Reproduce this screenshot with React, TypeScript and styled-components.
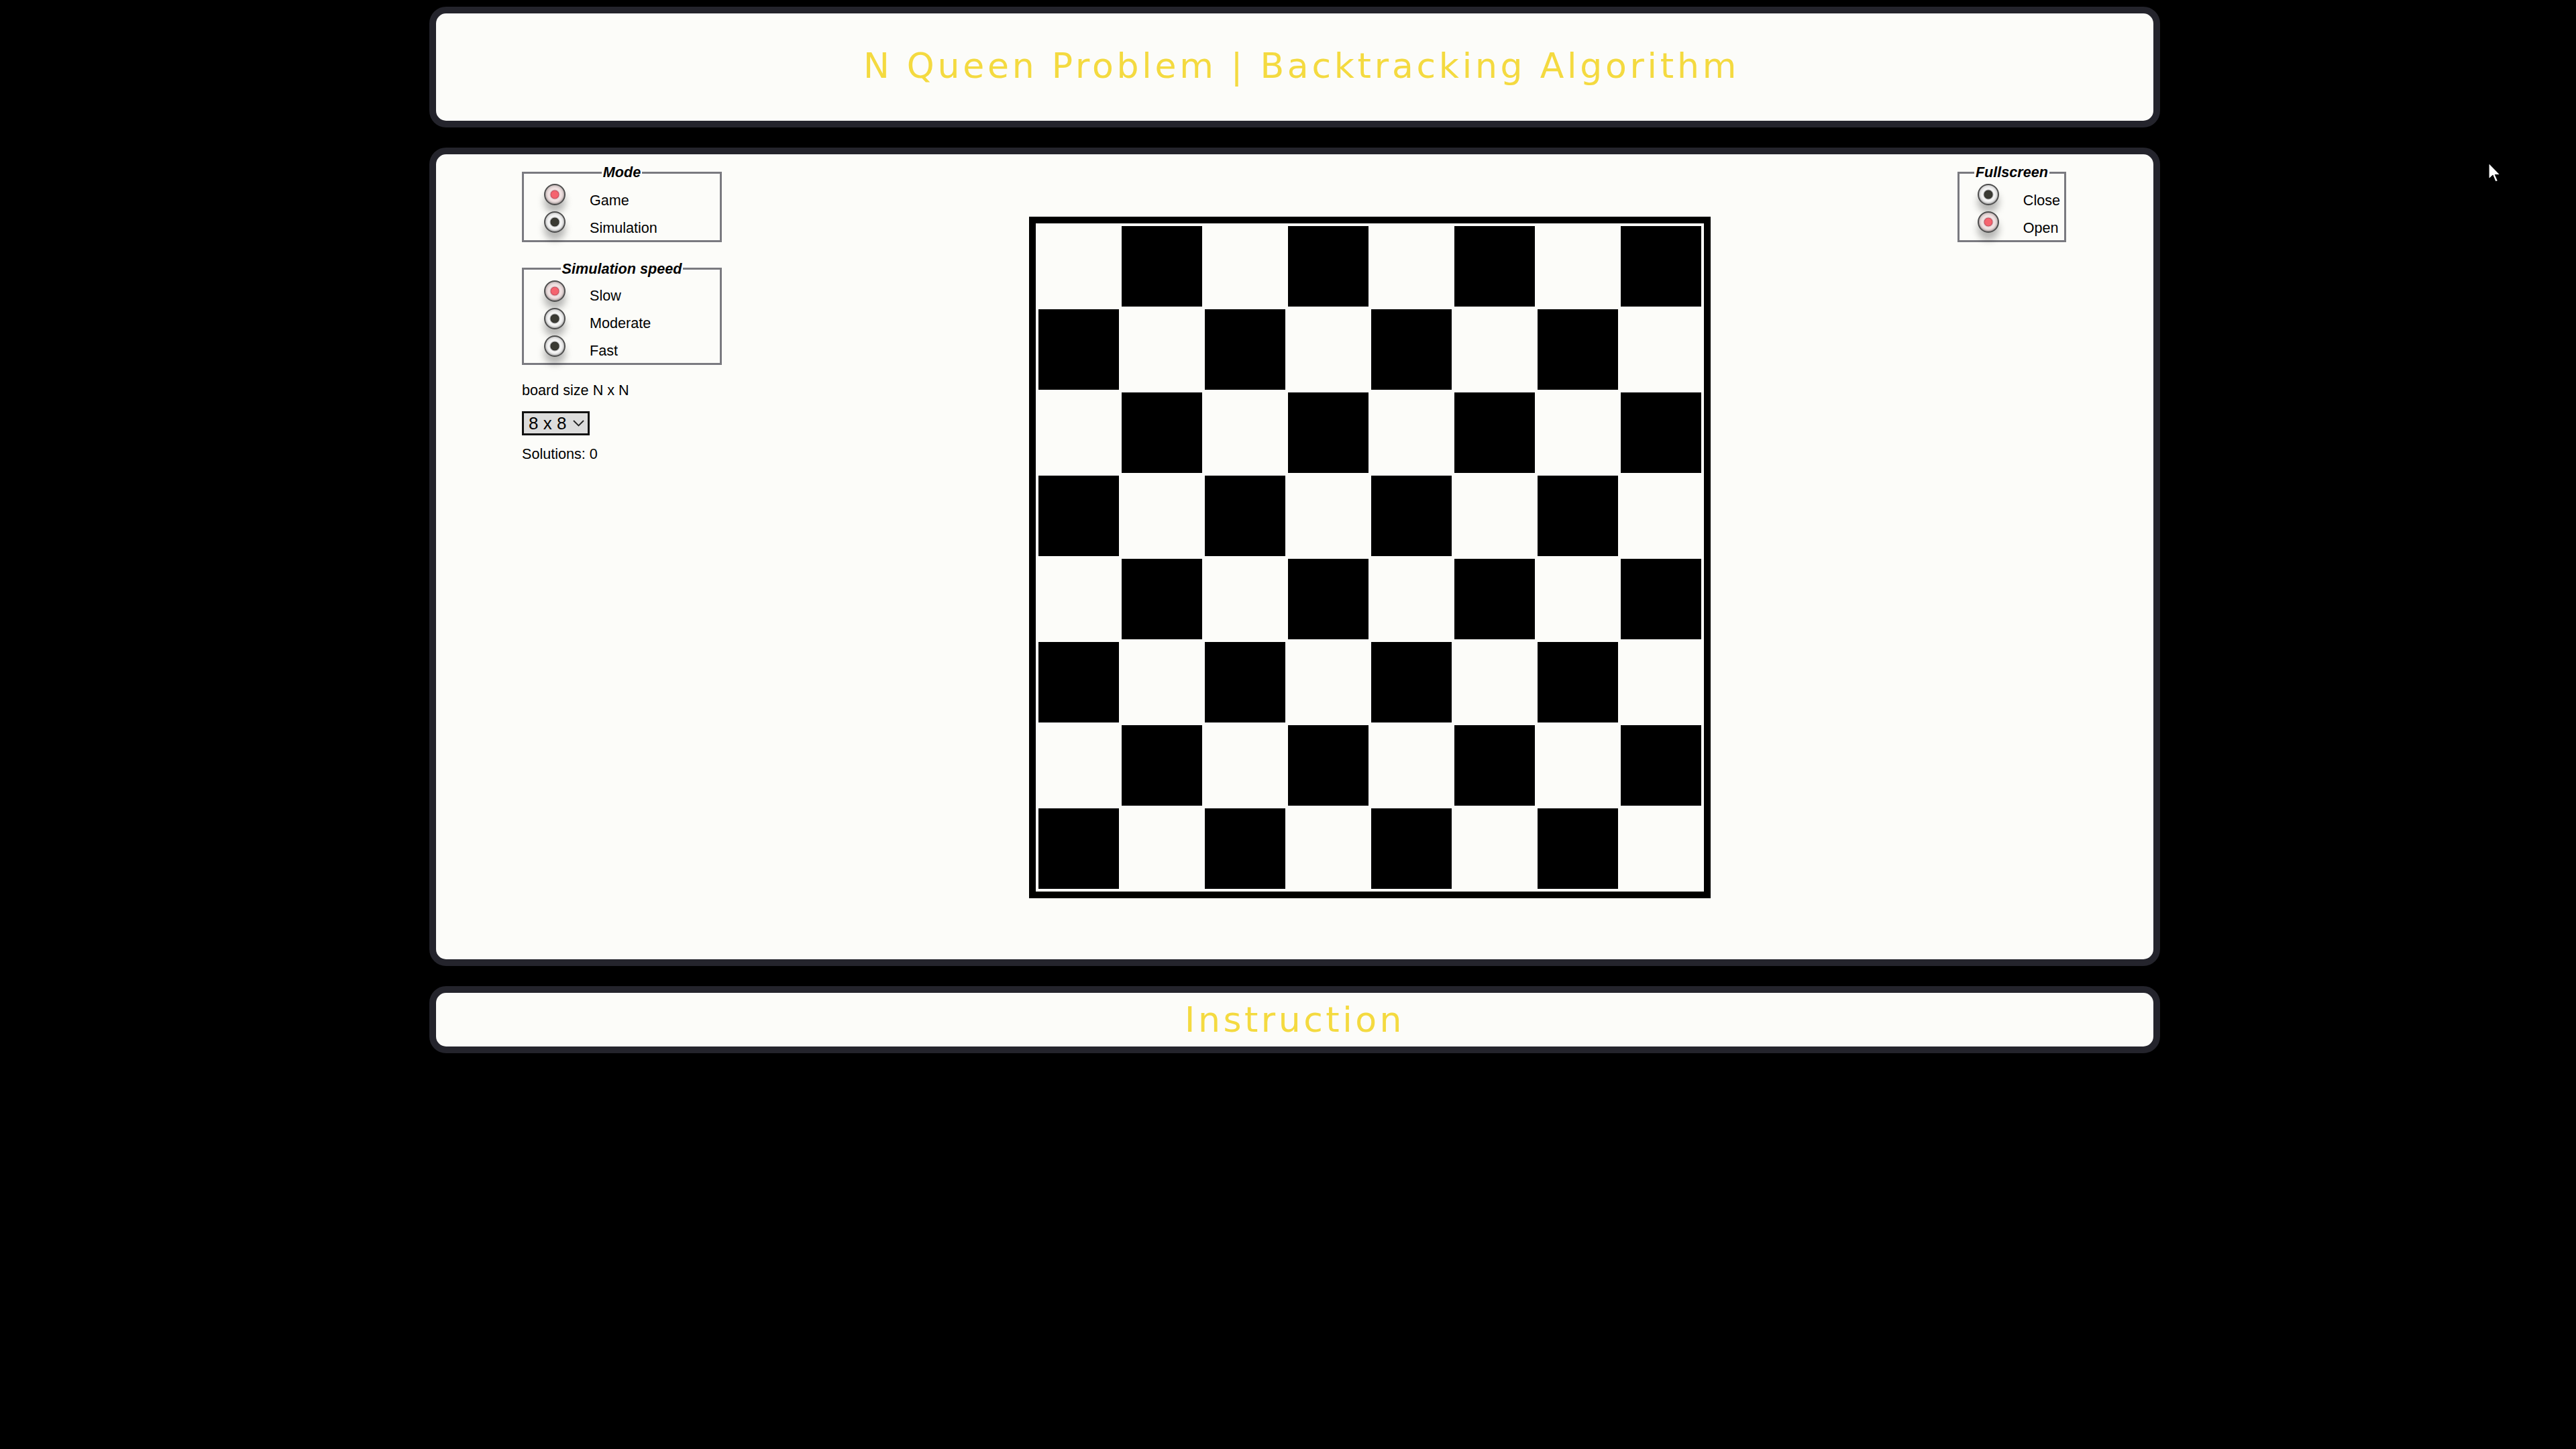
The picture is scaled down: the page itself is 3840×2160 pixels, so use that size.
import React from "react";
import styled, { createGlobalStyle } from "styled-components";

const GlobalStyle = createGlobalStyle`
  html, body { margin: 0; padding: 0; background: #000; }
  body {
    position: relative;
    min-height: 2160px;
    font-family: "Liberation Sans", Arial, sans-serif;
    color: #000;
  }
`;

const Page = styled.div`
  width: 2580px;
  margin-left: calc(50% - 1280px);
  padding-top: 10px;
  display: flex;
  flex-direction: column;
  gap: 30px;
`;

const Panel = styled.section`
  background: #fcfcf9;
  border: 10px solid #24242c;
  border-radius: 25px;
`;

const Heading = styled.h1<{ $pt: number; $pb: number; $pl: number; $ls: number }>`
  margin: 0;
  padding: ${(p) => p.$pt}px 0 ${(p) => p.$pb}px ${(p) => p.$pl}px;
  font-family: "DejaVu Sans", Verdana, sans-serif;
  font-weight: normal;
  font-size: 52px;
  line-height: 60px;
  letter-spacing: ${(p) => p.$ls}px;
  color: #f4da40;
  text-align: center;
`;

const Main = styled(Panel)`
  display: flex;
  align-items: flex-start;
  padding: 14px 130px 91px 128px;
`;

const Controls = styled.div`
  width: 298px;
  flex: none;
  display: flex;
  flex-direction: column;
  align-items: stretch;
`;

const Group = styled.fieldset<{ $mt?: number; $pb: number; $push?: boolean }>`
  margin: ${(p) => p.$mt ?? 0}px 0 0 ${(p) => (p.$push ? "auto" : "0")};
  min-width: 0;
  padding: 4px 0 ${(p) => p.$pb}px;
  border: 3px solid #7a7a80;
  flex: none;
`;

const Legend = styled.legend`
  margin: 0 auto;
  padding: 0 2px;
  font-weight: bold;
  font-style: italic;
  font-size: 21.6px;
  line-height: 26px;
`;

const OptionList = styled.div<{ $pl: number; $pr: number }>`
  display: flex;
  flex-direction: column;
  gap: 6px;
  padding: 0 ${(p) => p.$pr}px 0 ${(p) => p.$pl}px;
`;

const Option = styled.label`
  display: flex;
  align-items: flex-start;
  height: 35px;
`;

const Radio = styled.input.attrs({ type: "radio" })`
  appearance: none;
  -webkit-appearance: none;
  margin: 0;
  width: 32px;
  height: 32px;
  flex: none;
  box-sizing: border-box;
  border-radius: 50%;
  border: 2px solid #4e4e4e;
  background: radial-gradient(
    circle,
    #3b3b34 0 5.2px,
    #2c2c27 6px,
    #9c9c9c 6.7px,
    #f6f6f6 8px,
    #f2f2f2 10px,
    #d2d2d2 14px
  );
  box-shadow: 0 11px 11px rgba(0, 0, 0, 0.28), inset 0 -1px 2px rgba(0, 0, 0, 0.25);
  &:checked {
    background: radial-gradient(
      circle,
      #f5646f 0 4.8px,
      #c84a5a 6px,
      #d6b9bd 6.7px,
      #f2e4e4 8px,
      #eedfdf 10px,
      #cbbfbf 14px
    );
  }
`;

const OptionText = styled.span<{ $mt: number }>`
  margin: ${(p) => p.$mt}px 0 0 36px;
  font-size: 21.6px;
  line-height: 24px;
  white-space: nowrap;
`;

const Text = styled.div<{ $mt: number }>`
  margin-top: ${(p) => p.$mt}px;
  font-size: 21.6px;
  line-height: 24px;
`;

const SelectBox = styled.div`
  margin-top: 19px;
  align-self: flex-start;
  display: inline-flex;
  align-items: center;
  gap: 9px;
  height: 30px;
  padding: 0 5px 0 7px;
  border: 3px solid #111;
  background: #dcdcdc;
`;

const Select = styled.select`
  appearance: none;
  -webkit-appearance: none;
  width: 57px;
  height: 30px;
  margin: 0;
  padding: 0;
  border: none;
  outline: none;
  background: transparent;
  font-family: "Liberation Sans", Arial, sans-serif;
  font-size: 26px;
  line-height: 30px;
  color: #000;
`;

const Chevron = styled.svg`
  width: 17px;
  height: 10px;
  flex: none;
`;

const Board = styled.div`
  flex: none;
  margin: 79px 0 0 458px;
  border: 10px solid #000;
  padding: 2px;
  display: grid;
  grid-template-columns: repeat(8, 124px);
  grid-auto-rows: 124px;
`;

const Cell = styled.div<{ $dark: boolean }>`
  padding: 2px;
  background: ${(p) => (p.$dark ? "#000" : "transparent")};
  background-clip: content-box;
`;

const Cursor = styled.svg`
  position: absolute;
  left: 3709px;
  top: 242px;
  width: 20px;
  height: 32px;
`;

type Opt = { label: string; checked?: boolean };

function RadioGroup({
  title,
  name,
  options,
  pl,
  pr,
  pb,
  lt,
  mt,
  push,
}: {
  title: string;
  name: string;
  options: Opt[];
  pl: number;
  pr: number;
  pb: number;
  lt: number;
  mt?: number;
  push?: boolean;
}) {
  return (
    <Group $mt={mt} $pb={pb} $push={push}>
      <Legend>{title}</Legend>
      <OptionList $pl={pl} $pr={pr}>
        {options.map((o) => (
          <Option key={o.label}>
            <Radio name={name} defaultChecked={o.checked} />
            <OptionText $mt={lt}>{o.label}</OptionText>
          </Option>
        ))}
      </OptionList>
    </Group>
  );
}

export default function App() {
  const cells = [];
  for (let r = 0; r < 8; r++) {
    for (let c = 0; c < 8; c++) {
      cells.push(<Cell key={`${r}-${c}`} $dark={(r + c) % 2 === 1} />);
    }
  }
  return (
    <>
      <GlobalStyle />
      <Page>
        <Panel>
          <Heading $pt={48} $pb={52} $pl={20} $ls={4.75}>
            N Queen Problem | Backtracking Algorithm
          </Heading>
        </Panel>
        <Main>
          <Controls>
            <RadioGroup
              title="Mode"
              name="mode"
              pl={30}
              pr={0}
              pb={8}
              lt={13}
              options={[{ label: "Game", checked: true }, { label: "Simulation" }]}
            />
            <RadioGroup
              title="Simulation speed"
              name="speed"
              pl={30}
              pr={0}
              pb={6}
              lt={11}
              mt={26.5}
              options={[{ label: "Slow", checked: true }, { label: "Moderate" }, { label: "Fast" }]}
            />
            <Text $mt={26.5}>board size N x N</Text>
            <SelectBox>
              <Select defaultValue="8">
                <option value="4">4 x 4</option>
                <option value="5">5 x 5</option>
                <option value="6">6 x 6</option>
                <option value="7">7 x 7</option>
                <option value="8">8 x 8</option>
              </Select>
              <Chevron viewBox="0 0 17 10">
                <polyline points="1,1 8.5,8.5 16,1" fill="none" stroke="#222" strokeWidth="1.8" />
              </Chevron>
            </SelectBox>
            <Text $mt={16}>Solutions: 0</Text>
          </Controls>
          <Board>{cells}</Board>
          <RadioGroup
            title="Fullscreen"
            name="fullscreen"
            pl={27}
            pr={6}
            pb={8}
            lt={13}
            push
            options={[{ label: "Close" }, { label: "Open", checked: true }]}
          />
        </Main>
        <Panel>
          <Heading $pt={10} $pb={10} $pl={0} $ls={4.5}>
            Instruction
          </Heading>
        </Panel>
      </Page>
      <Cursor viewBox="0 0 20 32">
        <path
          d="M1 1 L1 25 L7 19.5 L11 29 L14.5 27.5 L10.5 18.5 L18 18.5 Z"
          fill="#fff"
          stroke="#000"
          strokeWidth="1.2"
          strokeLinejoin="round"
        />
      </Cursor>
    </>
  );
}
